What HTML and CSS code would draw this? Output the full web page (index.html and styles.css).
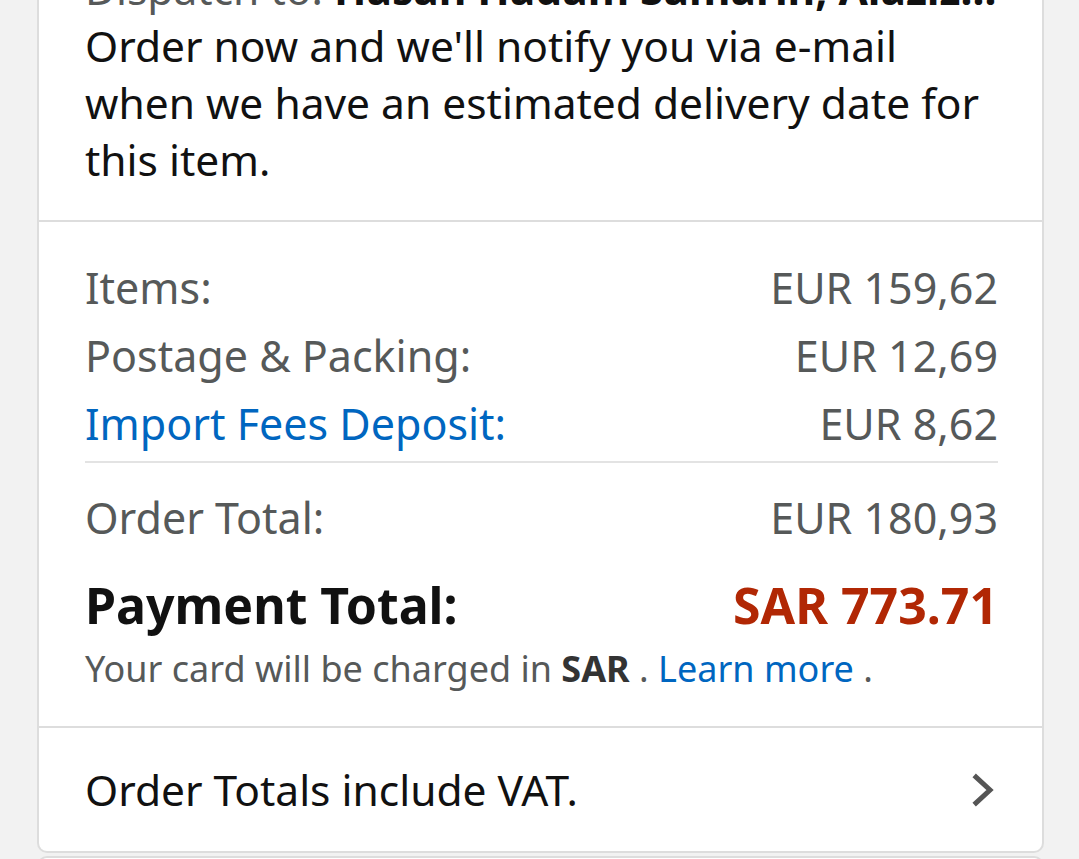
FILE: index.html
```html
<!DOCTYPE html>
<html>
<head>
<meta charset="utf-8">
<link rel="stylesheet" href="styles.css">
</head>
<body>
<div class="page">
  <div class="card">
    <section class="ship">
      <p class="ship-to"><span class="muted">Dispatch to:</span> <b>Hasan Hadam Samarin, Alaziz...</b></p>
      <p class="ship-note">Order now and we'll notify you via e-mail when we have an estimated delivery date for this item.</p>
    </section>
    <section class="summary">
      <div class="row"><span>Items:</span><span>EUR 159,62</span></div>
      <div class="row"><span>Postage &amp; Packing:</span><span>EUR 12,69</span></div>
      <div class="row"><a class="link" href="#">Import Fees Deposit:</a><span>EUR 8,62</span></div>
      <hr class="inner-rule">
      <div class="row"><span>Order Total:</span><span>EUR 180,93</span></div>
      <div class="row pay"><span>Payment Total:</span><span class="price">SAR 773.71</span></div>
      <p class="note">Your card will be charged in <b>SAR</b> . <a class="link" href="#">Learn more</a> .</p>
    </section>
    <section class="vat">
      <span>Order Totals include VAT.</span>
      <svg class="chev" width="24" height="34" viewBox="0 0 24 34"><path d="M4 4 L18 17 L4 30" fill="none" stroke="#555" stroke-width="5" stroke-linecap="square" stroke-linejoin="miter"/></svg>
    </section>
  </div>
  <div class="card next"></div>
</div>
</body>
</html>
```

FILE: styles.css
```css
html, body {
  margin: 0;
  padding: 0;
  background: #f2f2f2;
  overflow: hidden;
  height: 859px;
}
body {
  font-family: "Noto Sans", "Open Sans", sans-serif;
  color: #111;
}
.page {
  padding: 0 35px 0 37px;
  margin-top: -40px;
}
.card {
  background: #fff;
  border: 2px solid #dddddd;
  border-top: none;
  border-radius: 0 0 10px 10px;
}
.card.next {
  margin-top: 3px;
  height: 40px;
  border-top: 2px solid #ddd;
  border-radius: 10px 10px 0 0;
}
section {
  padding-left: 46px;
  padding-right: 44px;
}
.ship {
  padding-bottom: 32px;
  border-bottom: 2px solid #dddddd;
}
.ship p {
  margin: 0;
  font-size: 42.5px;
  line-height: 57px;
}
.muted { color: #565959; }
.summary {
  padding-top: 32px;
  padding-bottom: 24px;
  border-bottom: 2px solid #dddddd;
}
.row {
  display: flex;
  justify-content: space-between;
  font-size: 43px;
  line-height: 68px;
  color: #565959;
}
.link {
  color: #0066c0;
  text-decoration: none;
}
.inner-rule {
  border: none;
  border-top: 2px solid #e3e3e3;
  margin: 3px 0 21px;
}
.row.pay {
  font-size: 50px;
  font-weight: 700;
  color: #111;
  line-height: 66px;
  margin-top: 20px;
}
.price { color: #b12704; }
.note {
  margin: -2px 0 0;
  font-size: 36px;
  line-height: 66px;
  color: #565959;
}
.note b { color: #333; }
.vat {
  display: flex;
  justify-content: space-between;
  align-items: center;
  height: 123px;
  font-size: 42.5px;
  color: #111;
}
.chev { margin-right: 2px; }
```
